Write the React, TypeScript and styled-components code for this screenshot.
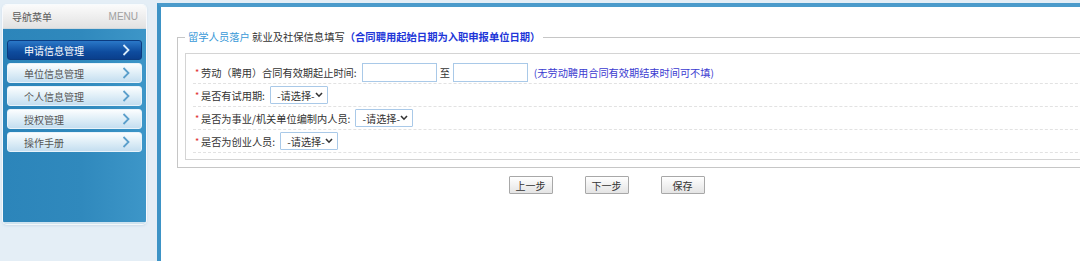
import React from "react";
import styled, { createGlobalStyle } from "styled-components";

const GlobalStyle = createGlobalStyle`
    html, body {
        margin: 0;
        padding: 0;
        background: #e4eef6;
        overflow: hidden;
        font-family: "Noto Sans CJK SC", "Noto Sans", "Liberation Sans", sans-serif;
    }
`;

const Page = styled.div`
    display: flex;
    height: 261px;
`;

const Sidebar = styled.div`
    width: 157px;
    box-sizing: border-box;
    padding: 5px 11px 0 3px;
    flex-shrink: 0;
`;

const Panel = styled.div`
    height: 219px;
    border-radius: 4px;
    overflow: hidden;
    display: flex;
    flex-direction: column;
    box-shadow: 0 0 0 1px rgba(255, 255, 255, 0.8), 0 1px 3px rgba(60, 110, 150, 0.25);
`;

const PanelHeader = styled.div`
    height: 23px;
    display: flex;
    align-items: center;
    justify-content: space-between;
    padding: 0 8px 0 9px;
    background: linear-gradient(#fbfbfb, #e2e2e2);
    border-bottom: 1px solid #cfd8de;
`;

const HeaderTitle = styled.span`
    font-size: 10px;
    color: #5a5a5a;
`;

const HeaderMenu = styled.span`
    font-family: "Liberation Sans", sans-serif;
    font-size: 10px;
    color: #a0a0a0;
`;

const PanelBody = styled.div`
    flex: 1;
    display: flex;
    flex-direction: column;
    gap: 3px;
    padding: 11px 4px;
    background: linear-gradient(90deg, #2c85ba, #3089bd 55%, #3d96c8);
    border-bottom: 2px solid #cfe3ef;
`;

const MenuItem = styled.div<{ $active?: boolean }>`
    height: 20px;
    box-sizing: border-box;
    border-radius: 3px;
    display: flex;
    align-items: center;
    justify-content: space-between;
    padding: 0 11px 0 16px;
    font-size: 10px;
    color: ${(p) => (p.$active ? "#ffffff" : "#555555")};
    background: ${(p) =>
        p.$active
            ? "linear-gradient(#2a78c8, #0e4c9e 60%, #0a3f8c)"
            : "linear-gradient(#fbfdfe, #e2f0f8 45%, #c4def0)"};
    border: 1px solid ${(p) => (p.$active ? "#0b3b80" : "#e8f3fa")};
`;

const Chevron = ({ color }: { color: string }) => (
    <svg width="8" height="12" viewBox="0 0 8 12">
        <polyline
            points="1.5,1 6.5,6 1.5,11"
            fill="none"
            stroke={color}
            strokeWidth="1.8"
        />
    </svg>
);

const Main = styled.div`
    flex: 1;
    margin-top: 3px;
    border-top: 4px solid #4b9bcb;
    border-left: 4px solid #3d93c6;
    background: #ffffff;
    overflow: hidden;
`;

const FieldSet = styled.fieldset`
    margin: 22px -40px 0 16px;
    padding: 0 0 7px 7px;
    border: 1px solid #c6c6c6;
    min-width: 0;
`;

const Legend = styled.legend`
    padding: 0 3px;
    font-size: 10.3px;
    line-height: 16px;
    color: #333;
`;

const LegendBlue = styled.span`
    color: #3a9ad8;
`;

const LegendStrong = styled.span`
    color: #2136d8;
    font-weight: bold;
`;

const InnerBox = styled.div`
    margin-top: 8px;
    border: 1px solid #d4d4d4;
    padding: 7px 0 6px 7px;
`;

const Row = styled.div`
    height: 22px;
    display: flex;
    align-items: center;
    padding-left: 2px;
    border-bottom: 1px dashed #e2e2e2;
    font-size: 10.2px;
    color: #333;
`;

const Star = styled.span`
    color: #e03030;
    width: 6px;
    font-size: 9px;
`;

const Label = styled.span`
    margin-right: 5px;
`;

const TextInput = styled.input`
    width: 75px;
    height: 19px;
    box-sizing: border-box;
    border: 1px solid #a9c9e8;
    margin: 0;
    padding: 0 3px;
`;

const To = styled.span`
    margin: 0 3px;
`;

const Note = styled.span`
    margin-left: 6px;
    color: #3b3bd0;
`;

const SelectWrap = styled.span`
    position: relative;
    display: inline-block;
`;

const Select = styled.select<{ $w: number }>`
    appearance: none;
    width: ${(p) => p.$w}px;
    height: 18px;
    box-sizing: border-box;
    border: 1px solid #a9c9e8;
    border-radius: 1px;
    background: #fff;
    padding: 0 0 0 6px;
    margin: 0;
    font-family: inherit;
    font-size: 10.2px;
    color: #333;
    outline: none;
`;

const SelectArrow = styled.svg`
    position: absolute;
    right: 5px;
    top: 6px;
    pointer-events: none;
`;

const ButtonBar = styled.div`
    display: flex;
    justify-content: center;
    gap: 32px;
    margin-top: 8px;
    padding-right: 28px;
`;

const Button = styled.button`
    width: 44px;
    height: 18px;
    box-sizing: border-box;
    padding: 0;
    border: 1px solid #a8a8a8;
    border-radius: 1px;
    background: linear-gradient(#ffffff, #e4e4e4);
    font-family: inherit;
    font-size: 10px;
    color: #333;
`;

const menus = ["申请信息管理", "单位信息管理", "个人信息管理", "授权管理", "操作手册"];

const Choose = ({ width }: { width: number }) => (
    <SelectWrap>
        <Select $w={width} defaultValue="">
            <option value="">-请选择-</option>
            <option value="1">是</option>
            <option value="0">否</option>
        </Select>
        <SelectArrow width="8" height="6" viewBox="0 0 8 6">
            <polyline points="1,1 4,4.2 7,1" fill="none" stroke="#333" strokeWidth="1.6" />
        </SelectArrow>
    </SelectWrap>
);

export default function App() {
    return (
        <>
            <GlobalStyle />
            <Page>
                <Sidebar>
                    <Panel>
                        <PanelHeader>
                            <HeaderTitle>导航菜单</HeaderTitle>
                            <HeaderMenu>MENU</HeaderMenu>
                        </PanelHeader>
                        <PanelBody>
                            {menus.map((m, i) => (
                                <MenuItem key={m} $active={i === 0}>
                                    <span>{m}</span>
                                    <Chevron color={i === 0 ? "#d8ecfa" : "#5b9fcb"} />
                                </MenuItem>
                            ))}
                        </PanelBody>
                    </Panel>
                </Sidebar>
                <Main>
                    <FieldSet>
                        <Legend>
                            <LegendBlue>留学人员落户</LegendBlue> 就业及社保信息填写
                            <LegendStrong>（合同聘用起始日期为入职申报单位日期）</LegendStrong>
                        </Legend>
                        <InnerBox>
                            <Row>
                                <Star>*</Star>
                                <Label>劳动（聘用）合同有效期起止时间:</Label>
                                <TextInput />
                                <To>至</To>
                                <TextInput />
                                <Note>(无劳动聘用合同有效期结束时间可不填)</Note>
                            </Row>
                            <Row>
                                <Star>*</Star>
                                <Label>是否有试用期:</Label>
                                <Choose width={58} />
                            </Row>
                            <Row>
                                <Star>*</Star>
                                <Label>是否为事业/机关单位编制内人员:</Label>
                                <Choose width={58} />
                            </Row>
                            <Row>
                                <Star>*</Star>
                                <Label>是否为创业人员:</Label>
                                <Choose width={58} />
                            </Row>
                        </InnerBox>
                    </FieldSet>
                    <ButtonBar>
                        <Button>上一步</Button>
                        <Button>下一步</Button>
                        <Button>保存</Button>
                    </ButtonBar>
                </Main>
            </Page>
        </>
    );
}
